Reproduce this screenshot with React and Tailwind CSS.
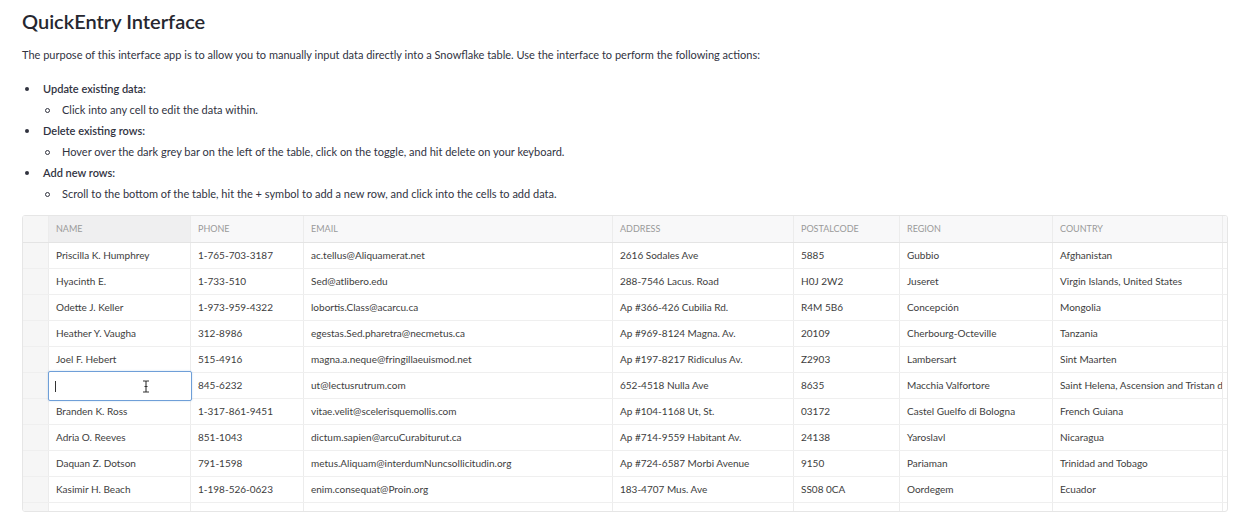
import React from "react";

const cols = ["NAME", "PHONE", "EMAIL", "ADDRESS", "POSTALCODE", "REGION", "COUNTRY"];
const rows = [
  ["Priscilla K. Humphrey", "1-765-703-3187", "ac.tellus@Aliquamerat.net", "2616 Sodales Ave", "5885", "Gubbio", "Afghanistan"],
  ["Hyacinth E.", "1-733-510", "Sed@atlibero.edu", "288-7546 Lacus. Road", "H0J 2W2", "Juseret", "Virgin Islands, United States"],
  ["Odette J. Keller", "1-973-959-4322", "lobortis.Class@acarcu.ca", "Ap #366-426 Cubilia Rd.", "R4M 5B6", "Concepción", "Mongolia"],
  ["Heather Y. Vaugha", "312-8986", "egestas.Sed.pharetra@necmetus.ca", "Ap #969-8124 Magna. Av.", "20109", "Cherbourg-Octeville", "Tanzania"],
  ["Joel F. Hebert", "515-4916", "magna.a.neque@fringillaeuismod.net", "Ap #197-8217 Ridiculus Av.", "Z2903", "Lambersart", "Sint Maarten"],
  ["", "845-6232", "ut@lectusrutrum.com", "652-4518 Nulla Ave", "8635", "Macchia Valfortore", "Saint Helena, Ascension and Tristan da Cunha"],
  ["Branden K. Ross", "1-317-861-9451", "vitae.velit@scelerisquemollis.com", "Ap #104-1168 Ut, St.", "03172", "Castel Guelfo di Bologna", "French Guiana"],
  ["Adria O. Reeves", "851-1043", "dictum.sapien@arcuCurabiturut.ca", "Ap #714-9559 Habitant Av.", "24138", "Yaroslavl", "Nicaragua"],
  ["Daquan Z. Dotson", "791-1598", "metus.Aliquam@interdumNuncsollicitudin.org", "Ap #724-6587 Morbi Avenue", "9150", "Pariaman", "Trinidad and Tobago"],
  ["Kasimir H. Beach", "1-198-526-0623", "enim.consequat@Proin.org", "183-4707 Mus. Ave", "SS08 0CA", "Oordegem", "Ecuador"],
  ["Lenore W. Mcbride", "1-552-301-7714", "nunc.sed@pedeultrices.co.uk", "Ap #812-3930 Erat Rd.", "41209", "Belford Roxo", "Guatemala"],
];

const grid = "grid grid-cols-[26px_142px_113px_309px_181px_106px_153px_170px]";

function IBeam() {
  return (
    <svg width="8" height="13" viewBox="0 0 8 13" className="absolute left-[93px] top-[8px]">
      <path d="M1 1h2.2q0.8 0 0.8 0.8v9.4q0 0.8 -0.8 0.8H1M7 1H4.8q-0.8 0 -0.8 0.8v9.4q0 0.8 0.8 0.8H7M2.5 6.5h3" fill="none" stroke="#333" strokeWidth="1.1" />
    </svg>
  );
}

export default function App() {
  return (
    <div className="w-[1240px] h-[522px] bg-white overflow-hidden px-[22px] pt-[8px] text-[#333]" style={{ fontFamily: "Lato, 'Liberation Sans', sans-serif" }}>
      <h1 className="text-[20px] leading-[26px] font-semibold text-[#262730]">QuickEntry Interface</h1>
      <p className="mt-[13px] text-[11px] leading-[16px] text-[#31333f]">
        The purpose of this interface app is to allow you to manually input data directly into a Snowflake table. Use the interface to perform the following actions:
      </p>
      <ul className="mt-[18px] text-[11px] leading-[16px] text-[#31333f]">
        {[
          ["Update existing data:", "Click into any cell to edit the data within."],
          ["Delete existing rows:", "Hover over the dark grey bar on the left of the table, click on the toggle, and hit delete on your keyboard."],
          ["Add new rows:", "Scroll to the bottom of the table, hit the + symbol to add a new row, and click into the cells to add data."],
        ].map(([h, s]) => (
          <li key={h} className="mb-[5px]">
            <div className="flex items-center h-[16px]">
              <span className="w-[4px] h-[4px] rounded-full bg-[#31333f] ml-[3px] mr-[14px]" />
              <span className="font-semibold">{h}</span>
            </div>
            <div className="flex items-center h-[16px] mt-[5px]">
              <span className="w-[5px] h-[5px] rounded-full border border-[#31333f] ml-[23px] mr-[12px]" />
              <span>{s}</span>
            </div>
          </li>
        ))}
      </ul>
      <div className="mt-[13px] w-[1206px] h-[297px] border border-[#e6e6e6] rounded-[3px] overflow-hidden relative">
        <div className={`${grid} h-[27px] bg-[#f8f8f9] border-b border-[#e4e4e4] text-[9px] text-[#9a9a9a]`}>
          <div className="bg-[#f6f6f6] border-r border-[#ececec]" />
          {cols.map((c, i) => (
            <div key={c} className={`flex items-center pl-[7px] border-r border-[#ececec] ${i === 0 ? "bg-[#efeff0]" : ""}`}>{c}</div>
          ))}
        </div>
        {rows.map((r, ri) => (
          <div key={ri} className={`${grid} h-[26px] border-b border-[#efefef] text-[10px] text-[#3d3d3d]`}>
            <div className="bg-[#f6f6f6] border-r border-[#ececec]" />
            {r.map((v, ci) =>
              ri === 5 && ci === 0 ? (
                <div key={ci} className="relative border-r border-[#ececec]">
                  <div className="absolute left-[-1px] right-[-2px] top-[-2px] bottom-[-3px] border border-[#6f9fd8] rounded-[2px] bg-white flex items-center pl-[6px] z-10 shadow-[0_0_2px_rgba(111,159,216,0.4)]">
                    <span className="w-px h-[11px] bg-[#333]" />
                    <IBeam />
                  </div>
                </div>
              ) : (
                <div key={ci} className="relative flex items-center pl-[7px] border-r border-[#ececec] whitespace-nowrap overflow-hidden">
                  {v}
                </div>
              )
            )}
          </div>
        ))}
      </div>
    </div>
  );
}
